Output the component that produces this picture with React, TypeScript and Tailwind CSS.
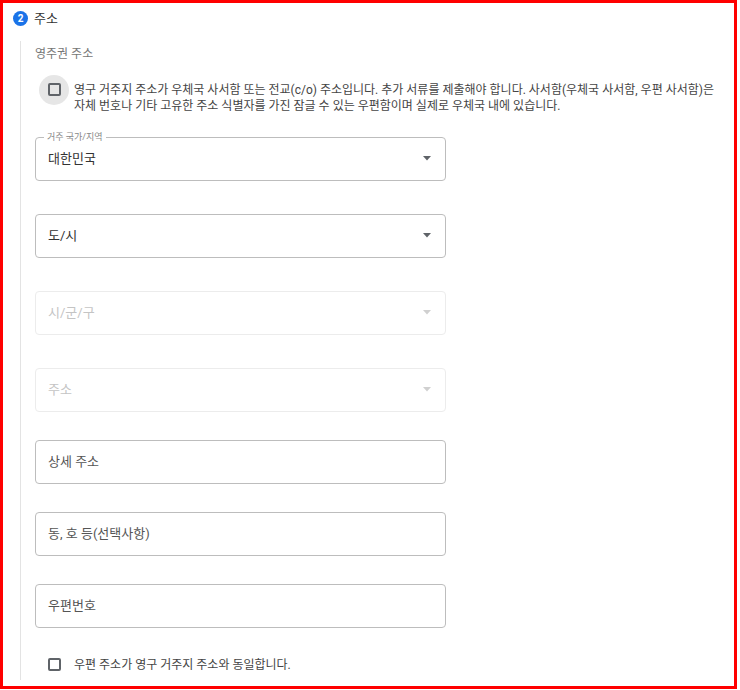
import { ReactNode } from 'react';

const FONT = { fontFamily: 'Roboto, "Noto Sans CJK KR", "Noto Sans", sans-serif' };

function Caret({ disabled }: { disabled?: boolean }) {
  return (
    <svg width="8" height="5" viewBox="0 0 8 5" className="shrink-0">
      <path d="M0 0h8L4 4.5z" fill={disabled ? '#d0d0d0' : '#5f6368'} />
    </svg>
  );
}

function SelectField({ value, label, disabled }: { value: string; label?: string; disabled?: boolean }) {
  return (
    <div
      className={
        'relative w-[411px] h-[44px] rounded-[4px] border flex items-center justify-between pl-[12px] pr-[14px] ' +
        (disabled ? 'border-[#ececec]' : 'border-[#bdbdbd]')
      }
    >
      {label && (
        <span className="absolute -top-[7px] left-[8px] bg-white px-[3px] text-[9px] leading-[12px] text-[#888]">
          {label}
        </span>
      )}
      <span className={'text-[13px] ' + (disabled ? 'text-[#c4c4c4]' : 'text-[#333]')}>{value}</span>
      <Caret disabled={disabled} />
    </div>
  );
}

function TextField({ placeholder }: { placeholder: string }) {
  return (
    <div className="w-[411px] h-[44px] rounded-[4px] border border-[#bdbdbd] flex items-center pl-[12px]">
      <span className="text-[13px] text-[#555]">{placeholder}</span>
    </div>
  );
}

function CheckRow({ children, focused }: { children: ReactNode; focused?: boolean }) {
  return (
    <div className="flex items-start">
      <div
        className={
          'ml-[4px] w-[30px] h-[30px] rounded-full flex items-center justify-center shrink-0 ' +
          (focused ? 'bg-[#e6e6e6]' : '')
        }
      >
        <div className="w-[13px] h-[13px] border-2 border-[#5f6368] rounded-[2px]" />
      </div>
      <div className="ml-[5px] mt-[7px] text-[12px] leading-[16px] text-[#444] whitespace-nowrap">{children}</div>
    </div>
  );
}

export default function App() {
  return (
    <div className="bg-white w-[740px] h-[690px]" style={FONT}>
      <div className="box-border w-[737px] h-[689px] border-[3px] border-[#ff0000] flex flex-col">
        {/* Step header */}
        <div className="flex items-center pl-[10px] pt-[6px]">
          <div className="w-[15px] h-[15px] rounded-full bg-[#1a73e8] text-white text-[10px] font-bold flex items-center justify-center">
            2
          </div>
          <span className="ml-[6px] text-[13px] text-[#333]">주소</span>
        </div>

        <div className="flex-1 ml-[17px] mt-[12px] mb-[6px] border-l border-[#e3e3e3] pl-[14px] pt-[5px] flex flex-col">
          <div className="text-[12px] leading-[16px] text-[#777]">영주권 주소</div>

          <div className="mt-[13px]">
            <CheckRow focused>
              <div>
                영구 거주지 주소가 우체국 사서함 또는 전교(c/o) 주소입니다. 추가 서류를 제출해야 합니다. 사서함(우체국 사서함, 우편 사서함)은
              </div>
              <div>자체 번호나 기타 고유한 주소 식별자를 가진 잠글 수 있는 우편함이며 실제로 우체국 내에 있습니다.</div>
            </CheckRow>
          </div>

          <div className="mt-[23px] flex flex-col gap-[33px]">
            <SelectField label="거주 국가/지역" value="대한민국" />
            <SelectField value="도/시" />
            <SelectField value="시/군/구" disabled />
            <SelectField value="주소" disabled />
          </div>

          <div className="mt-[28px] flex flex-col gap-[28px]">
            <TextField placeholder="상세 주소" />
            <TextField placeholder="동, 호 등(선택사항)" />
            <TextField placeholder="우편번호" />
          </div>

          <div className="mt-[22px]">
            <CheckRow>우편 주소가 영구 거주지 주소와 동일합니다.</CheckRow>
          </div>
        </div>
      </div>
    </div>
  );
}
